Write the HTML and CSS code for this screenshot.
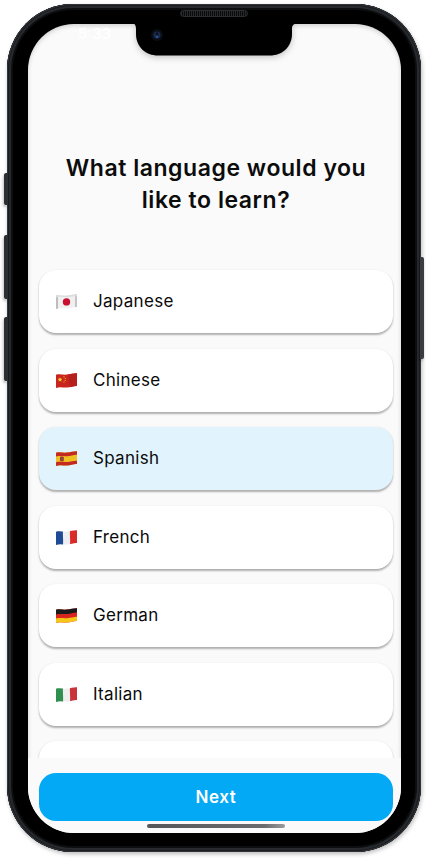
FILE: index.html
```html
<!DOCTYPE html>
<html lang="en">
<head>
<meta charset="utf-8">
<title>Language selection</title>
<link rel="stylesheet" href="styles.css">
</head>
<body>
<svg class="defs" width="0" height="0" aria-hidden="true">
  <defs>
    <clipPath id="wave"><path d="M0 1.800C4 .4 7 2.200 11 1.600S18 0 21 .2V13C18 12.600 15 14.400 11 14.600S4 13.600 0 15Z"/></clipPath>
  </defs>
</svg>
<div class="phone">
  <span class="side-btn side-silent"></span>
  <span class="side-btn side-up"></span>
  <span class="side-btn side-down"></span>
  <span class="side-btn side-power"></span>
  <span class="speaker"></span>
  <main class="screen">
    <span class="clock">5:33</span>
    <svg class="notch" width="162" height="40" viewBox="0 0 162 40" aria-hidden="true">
      <path d="M0 0H162C159 0 158 2 158 5V10C158 23 148 31.500 136 31.500H24C12 31.500 2 23 2 10V5C2 2 1 0 0 0Z" fill="#000"/>
      <circle cx="23" cy="11" r="6" fill="#0b0d14"/>
      <circle cx="23" cy="11" r="3.600" fill="#1a2a4a"/>
      <circle cx="23" cy="9.800" r="1.300" fill="#0a0e18"/>
      <circle cx="23" cy="13" r="1" fill="#2d62b0"/>
    </svg>
    <h1 class="title">What language would you<br>like to learn?</h1>
    <ul class="list">
      <li class="card">
        <svg class="flag" viewBox="0 0 21 15" aria-hidden="true"><g clip-path="url(#wave)"><rect width="21" height="15" fill="#f0f0f0"/><path d="M0 0H2V15H0Z" fill="#bdbdbd"/><path d="M19 0H21V15H19Z" fill="#c4c4c4"/><path d="M0 0H21V2.600C18 1.600 15 3.200 11 3.200S4 2 0 3.400Z" fill="#dcdcdc"/><circle cx="10.500" cy="7.900" r="3.700" fill="#c8102e"/></g></svg>
        <span class="label">Japanese</span>
      </li>
      <li class="card">
        <svg class="flag" viewBox="0 0 21 15" aria-hidden="true"><g clip-path="url(#wave)"><rect width="21" height="15" fill="#c8251f"/><path d="M11 0C14 3 12 11 15 15H21V0Z" fill="#b71f1c"/><path d="M4 4.200l.8 1.500 1.600.1-1.200 1.100.4 1.600-1.600-.8-1.500.8.400-1.600L1.600 5.800l1.600-.1Z" fill="#f5cf2e"/><circle cx="8" cy="3.800" r=".6" fill="#f5cf2e"/><circle cx="9.300" cy="5.500" r=".6" fill="#f5cf2e"/><circle cx="9.200" cy="7.500" r=".6" fill="#f5cf2e"/><circle cx="8" cy="9" r=".6" fill="#f5cf2e"/></g></svg>
        <span class="label">Chinese</span>
      </li>
      <li class="card card-selected">
        <svg class="flag" viewBox="0 0 21 15" aria-hidden="true"><g clip-path="url(#wave)"><rect width="21" height="15" fill="#f0c020"/><path d="M0 0H21V3.800C18 3.500 15 5 11 5.200S4 4.500 0 5.600Z" fill="#c22a22"/><path d="M0 11.300C4 10.300 7 11.300 11 11S18 9.500 21 9.700V15H0Z" fill="#c22a22"/><rect x="4" y="5.600" width="3.800" height="4.600" rx="1" fill="#a5382a"/><rect x="5.200" y="6.800" width="1.600" height="2" fill="#5b5b6a"/></g></svg>
        <span class="label">Spanish</span>
      </li>
      <li class="card">
        <svg class="flag" viewBox="0 0 21 15" aria-hidden="true"><g clip-path="url(#wave)"><rect width="21" height="15" fill="#eeeef2"/><path d="M0 0H7C6.500 5 7.500 10 7 15H0Z" fill="#1f4a94"/><path d="M14 0H21V15H14C14.600 10 13.500 5 14 0Z" fill="#da2b2b"/></g></svg>
        <span class="label">French</span>
      </li>
      <li class="card">
        <svg class="flag" viewBox="0 0 21 15" aria-hidden="true"><g clip-path="url(#wave)"><rect width="21" height="15" fill="#d8251f"/><path d="M0 0H21V4.600C18 4.300 15 5.800 11 6S4 5.400 0 6.400Z" fill="#1a1a1a"/><path d="M0 10.500C4 9.700 7 10.400 11 10.200S18 8.700 21 8.800V15H0Z" fill="#f5c518"/></g></svg>
        <span class="label">German</span>
      </li>
      <li class="card">
        <svg class="flag" viewBox="0 0 21 15" aria-hidden="true"><g clip-path="url(#wave)"><rect width="21" height="15" fill="#eeeeee"/><path d="M0 0H7C6.500 5 7.500 10 7 15H0Z" fill="#2f8f4f"/><path d="M14 0H21V15H14C14.600 10 13.500 5 14 0Z" fill="#c9343a"/></g></svg>
        <span class="label">Italian</span>
      </li>
      <li class="card"></li>
    </ul>
    <footer class="footer">
      <button class="next" type="button">Next</button>
    </footer>
    <span class="home"></span>
  </main>
</div>
</body>
</html>
```

FILE: styles.css
```css
* {
  box-sizing: border-box;
}

html,
body {
  margin: 0;
  height: 862px;
  overflow: hidden;
  background: #fff;
  font-family: Inter, "Liberation Sans", sans-serif;
}

.defs {
  position: absolute;
}

.phone {
  position: relative;
  width: 414px;
  height: 848px;
  margin: 4px 0 0 7px;
  padding: 20px 20px 19px 21px;
  border-radius: 66px;
  background: #000;
  box-shadow:
    inset 0 0 0 1px #33363a,
    inset 0 0 0 2px #1a1c1f,
    inset 0 0 0 4px #26292d,
    inset 0 0 0 6px #0d0e0f,
    1px 2px 4px rgba(0, 0, 0, 0.28);
}

.side-btn {
  position: absolute;
  width: 4px;
  background: #2c2e32;
  box-shadow: -1px 2px 3px rgba(0, 0, 0, 0.25);
}

.side-silent {
  left: -3px;
  top: 169px;
  height: 32px;
  border-radius: 2px 0 0 2px;
}

.side-up {
  left: -3px;
  top: 231px;
  height: 64px;
  border-radius: 2px 0 0 2px;
}

.side-down {
  left: -3px;
  top: 313px;
  height: 64px;
  border-radius: 2px 0 0 2px;
}

.side-power {
  right: -3px;
  top: 253px;
  height: 102px;
  background: #3a3c40;
  border-radius: 0 2px 2px 0;
}

.speaker {
  position: absolute;
  z-index: 3;
  left: 173px;
  top: 6px;
  width: 68px;
  height: 7px;
  border-radius: 4px;
  border: 1px solid #2c2e31;
  background: repeating-linear-gradient(90deg, #26282b 0 1px, #0b0b0c 1px 2px);
}

.screen {
  position: relative;
  display: block;
  width: 373px;
  height: 809px;
  overflow: hidden;
  border-radius: 46px;
  background: #fafafa;
  padding-top: 128px;
  box-shadow: inset 0 2px 4px rgba(0, 0, 0, 0.16);
}

.clock {
  position: absolute;
  left: 50px;
  top: 0;
  font-size: 15px;
  font-weight: 600;
  color: #fff;
}

.notch {
  position: absolute;
  left: 106px;
  top: 0;
  filter: drop-shadow(0 2px 3px rgba(0, 0, 0, 0.22));
}

.title {
  margin: 0 8px 54px 11px;
  font-size: 23px;
  font-weight: 600;
  line-height: 32px;
  letter-spacing: 0.55px;
  text-align: center;
  color: #0c0c0c;
}

.list {
  display: flex;
  flex-direction: column;
  gap: 15.5px;
  margin: 0;
  padding: 0 8px 0 11px;
  list-style: none;
}

.card {
  display: flex;
  flex: none;
  align-items: center;
  gap: 16px;
  height: 63px;
  padding-left: 17px;
  border-radius: 17px;
  background: #fff;
  box-shadow: 0 1.500px 2px rgba(0, 0, 0, 0.3);
}

.card-selected {
  background: #e1f4fd;
}

.flag {
  flex: none;
  width: 21px;
  height: 15px;
}

.label {
  padding-bottom: 1px;
  font-size: 17px;
  line-height: 24px;
  letter-spacing: 0.3px;
  color: #0a0a0a;
}

.footer {
  position: absolute;
  left: 0;
  right: 0;
  bottom: 0;
  height: 75px;
  padding: 15px 8px 0 11px;
  background: #fafafa;
}

.next {
  display: block;
  width: 100%;
  height: 48px;
  border: 0;
  border-radius: 17px;
  background: #03a9f4;
  font-family: inherit;
  font-size: 17px;
  font-weight: 600;
  letter-spacing: 0.6px;
  color: #fff;
}

.home {
  position: absolute;
  left: 119px;
  bottom: 5px;
  width: 138px;
  height: 4px;
  border-radius: 2px;
  background: linear-gradient(90deg, #55575a, #6a6b6e 85%, #9a9b9d);
}
```
